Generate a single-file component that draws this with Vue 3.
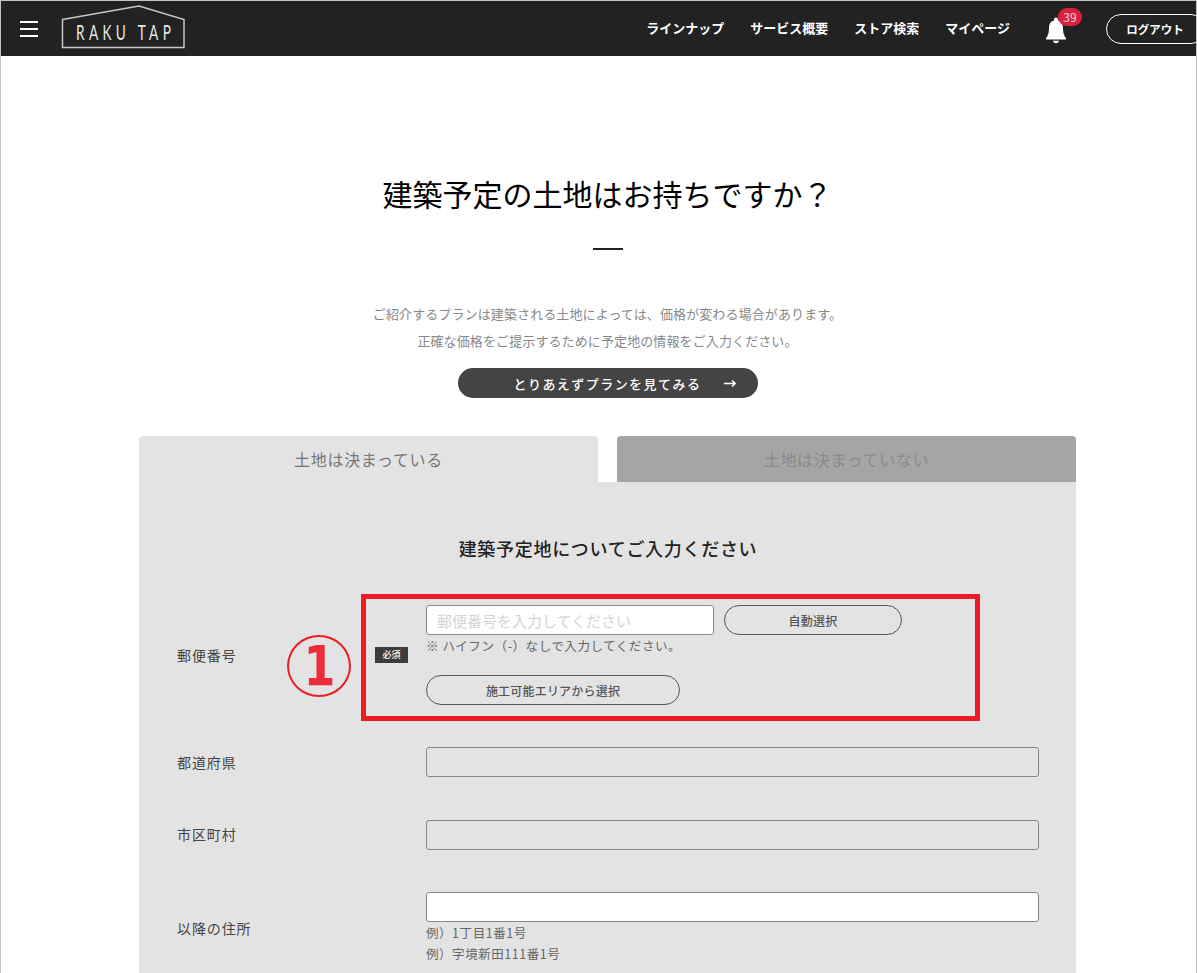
<template>
  <div class="page">
    <header class="header">
      <button class="menu" aria-label="menu"><span></span><span></span><span></span></button>
      <a class="logo">
        <svg width="124" height="44" viewBox="0 0 124 44">
          <path d="M1.5 14.5 L78 1 L123 14.5 V42.5 H1.5 Z" fill="none" stroke="#c8c8c8" stroke-width="1.5" />
        </svg>
        <span class="logo-text">RAKU TAP</span>
      </a>
      <nav class="nav">
        <a v-for="item in navItems" :key="item">{{ item }}</a>
      </nav>
      <div class="bell">
        <svg width="24" height="28" viewBox="0 0 24 28">
          <path d="M12 1.5c-1.2 0-2 .9-2 2v.9C6.5 5.400 5 8.300 5 12c0 4.500-.7 7.200-3 10.200V23.500h20v-1.300C19.700 19.200 19 16.500 19 12c0-3.700-1.500-6.600-5-7.600v-.9c0-1.100-.8-2-2-2z" fill="#fff" />
          <path d="M9 24.800h6c-.2 1.500-1.400 2.500-3 2.500s-2.800-1-3-2.500z" fill="#fff" />
        </svg>
        <span class="count">39</span>
      </div>
      <button class="logout">ログアウト</button>
    </header>

    <main class="main">
      <h1 class="title">建築予定の土地はお持ちですか？</h1>
      <div class="dash"></div>
      <p class="lead">ご紹介するプランは建築される土地によっては、価格が変わる場合があります。<br />正確な価格をご提示するために予定地の情報をご入力ください。</p>
      <button class="skip">
        とりあえずプランを見てみる
        <svg class="arrow" width="12" height="9" viewBox="0 0 12 9">
          <path d="M0 4.500H11M8 1.500 11 4.500 8 7.500" fill="none" stroke="#fff" stroke-width="1.600" />
        </svg>
      </button>

      <section class="box">
        <div class="tabs">
          <div class="tab active">土地は決まっている</div>
          <div class="tab">土地は決まっていない</div>
        </div>
        <div class="panel">
          <h2 class="panel-title">建築予定地についてご入力ください</h2>

          <div class="row postal">
            <label>郵便番号</label>
            <span class="req">必須</span>
            <div class="field">
              <div class="zip-line">
                <input class="input zip" placeholder="郵便番号を入力してください" />
                <button class="pill auto">自動選択</button>
              </div>
              <p class="note first">※ ハイフン（-）なしで入力してください。</p>
              <button class="pill area">施工可能エリアから選択</button>
            </div>
            <div class="mark-box"></div>
            <div class="mark-num"><span>1</span></div>
          </div>

          <div class="row">
            <label>都道府県</label>
            <span></span>
            <div class="field"><input class="input off" disabled /></div>
          </div>
          <div class="row">
            <label>市区町村</label>
            <span></span>
            <div class="field"><input class="input off" disabled /></div>
          </div>
          <div class="row">
            <label>以降の住所</label>
            <span></span>
            <div class="field">
              <input class="input" />
              <p class="note">例）1丁目1番1号</p>
              <p class="note">例）字境新田111番1号</p>
            </div>
          </div>
        </div>
      </section>
    </main>
  </div>
</template>

<script setup>
const navItems = ['ラインナップ', 'サービス概要', 'ストア検索', 'マイページ']
</script>

<style>
html, body {
  margin: 0;
  background: #fff;
}
</style>

<style scoped>
.page {
  box-sizing: border-box;
  width: 1197px;
  height: 973px;
  overflow: hidden;
  border: 1px solid #c4c4c4;
  border-bottom: 0;
  background: #fff;
  font-family: "Noto Sans CJK JP", "Noto Sans", sans-serif;
  color: #333;
}
button, input {
  font-family: inherit;
}
.header {
  display: flex;
  align-items: center;
  width: 1213px;
  height: 55px;
  box-sizing: border-box;
  padding-left: 19px;
  background: #222;
}
.menu {
  display: flex;
  flex-direction: column;
  gap: 5px;
  width: 18px;
  padding: 0;
  border: 0;
  background: none;
}
.menu span {
  display: block;
  height: 2px;
  background: #fff;
}
.logo {
  position: relative;
  display: block;
  width: 124px;
  height: 44px;
  margin-left: 23px;
  margin-top: -3px;
}
.logo svg {
  display: block;
}
.logo-text {
  position: absolute;
  left: 15px;
  top: 15px;
  font-family: Lato, sans-serif;
  font-weight: 400;
  font-size: 22px;
  line-height: 24px;
  letter-spacing: 7px;
  color: #e6e6e6;
  white-space: nowrap;
  transform: scaleX(.62);
  transform-origin: left center;
}
.nav {
  display: flex;
  gap: 26px;
  margin-left: auto;
  margin-top: -2px;
  font-size: 13px;
  font-weight: 700;
  color: #fff;
}
.bell {
  position: relative;
  width: 24px;
  height: 28px;
  margin-left: 34px;
  margin-top: 3px;
}
.count {
  position: absolute;
  left: 14px;
  top: -8px;
  width: 24px;
  height: 18px;
  border-radius: 9px;
  background: #d8203f;
  color: #f3d5da;
  font-size: 12px;
  line-height: 18px;
  text-align: center;
}
.logout {
  width: 100px;
  height: 30px;
  margin-left: 38px;
  margin-right: 8px;
  padding: 1px 0 0;
  border: 1px solid #fff;
  border-radius: 15px;
  background: #222;
  color: #fff;
  font-size: 11.500px;
  font-weight: 700;
  text-indent: -2px;
}
.main {
  width: 1213px;
  padding-top: 112px;
  text-align: center;
}
.title {
  margin: 0;
  font-size: 30px;
  font-weight: 400;
  line-height: 50px;
  color: #000;
}
.dash {
  width: 30px;
  height: 2px;
  margin: 30px auto 0;
  background: #222;
}
.lead {
  margin: 50px 0 0;
  font-size: 13px;
  line-height: 27px;
  letter-spacing: .11px;
  color: #888;
}
.skip {
  display: flex;
  align-items: center;
  width: 300px;
  height: 30px;
  margin: 14px auto 0;
  padding: 0 0 0 56px;
  border: 0;
  border-radius: 15px;
  background: #444;
  color: #fff;
  font-size: 13px;
  font-weight: 500;
  letter-spacing: 1.450px;
  text-align: left;
}
.arrow {
  margin-left: 23px;
}
.box {
  width: 937px;
  margin: 38px auto 0;
  text-align: left;
}
.tabs {
  display: flex;
  gap: 19px;
}
.tab {
  width: 459px;
  height: 46px;
  border-radius: 4px 4px 0 0;
  background: #a5a5a5;
  color: #8a8a8a;
  font-size: 16px;
  line-height: 46px;
  letter-spacing: .7px;
  text-align: center;
}
.tab.active {
  background: #e3e3e3;
  color: #777;
}
.panel {
  height: 600px;
  padding: 49px 37px 0 38px;
  background: #e3e3e3;
}
.panel-title {
  margin: 0 0 40px;
  font-size: 18px;
  font-weight: 500;
  line-height: 34px;
  letter-spacing: .7px;
  color: #222;
  text-align: center;
}
.row {
  position: relative;
  display: grid;
  grid-template-columns: 198px 33px 1fr;
  align-items: center;
  margin-bottom: 42.400px;
}
.row label {
  padding-bottom: 1px;
  font-size: 14px;
  letter-spacing: .9px;
  color: #444;
}
.field {
  margin-left: 18px;
}
.req {
  height: 16px;
  background: #3c3c3c;
  color: #fff;
  font-size: 9px;
  font-weight: 500;
  line-height: 16px;
  text-align: center;
}
.zip-line {
  display: flex;
  gap: 10px;
}
.input {
  display: block;
  box-sizing: border-box;
  width: 100%;
  height: 30px;
  padding: 0 10px;
  border: 1px solid #888;
  border-radius: 3px;
  background: #fff;
  font-size: 15px;
}
.input::placeholder {
  color: #d4d4d4;
}
.input.off {
  background: #e3e3e3;
}
.input.zip {
  width: 288px;
}
.note {
  margin: 0;
  font-size: 12.500px;
  line-height: 21px;
  letter-spacing: .55px;
  color: #666;
}
.note.first {
  margin-bottom: 19px;
}
.pill {
  display: block;
  height: 30px;
  padding: 0;
  border: 1px solid #555;
  border-radius: 15px;
  background: #e3e3e3;
  color: #555;
  font-size: 12px;
  font-weight: 500;
  letter-spacing: .2px;
}
.auto {
  width: 178px;
}
.area {
  width: 254px;
}
.mark-box {
  position: absolute;
  left: 184px;
  top: -11px;
  width: 619px;
  height: 127px;
  box-sizing: border-box;
  border: 5px solid #ed1c24;
}
.mark-num {
  position: absolute;
  left: 110px;
  top: 30px;
  width: 64px;
  height: 62px;
  box-sizing: border-box;
  border: 2px solid #ed1c24;
  border-radius: 50%;
  color: #ee2b38;
  font-family: "DejaVu Sans", sans-serif;
  font-size: 56px;
  font-weight: 700;
  line-height: 58px;
  text-align: center;
}
.mark-num span {
  display: inline-block;
  transform: scaleX(.82);
}
</style>
